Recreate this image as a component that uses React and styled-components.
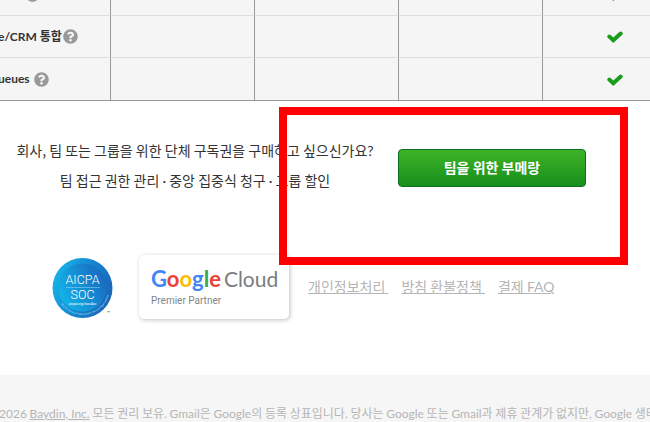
import React from 'react'
import styled, { createGlobalStyle } from 'styled-components'
import { FaQuestionCircle } from 'react-icons/fa'

const GlobalStyle = createGlobalStyle`
  * {
    box-sizing: border-box;
  }
  body {
    margin: 0;
    background: #fff;
    color: #333;
    font-family: "Noto Sans CJK KR", sans-serif;
    font-size: 14px;
    overflow-x: hidden;
  }
`

const Latin = styled.span`
  font-family: Lato, sans-serif;
  line-height: 1;
`

const Page = styled.div`
  position: relative;
  overflow: hidden;
`

const Features = styled.table`
  width: calc(100% + 37px);
  margin-top: -26px;
  table-layout: fixed;
  border-collapse: separate;
  border-spacing: 0;
  background: #f5f5f5;
  border-bottom: 1px solid #999;
`

const NameCell = styled.th`
  width: 111px;
  height: 42px;
  padding: 0;
  border-right: 1px solid #999;
  border-bottom: 1px solid #ddd;
  font-family: Lato, "Noto Sans CJK KR", sans-serif;
  font-size: 12px;
  font-weight: bold;
  line-height: 18px;
  text-align: left;
  white-space: nowrap;
  tr:last-child & {
    border-bottom: 0;
  }
`

const NameRow = styled.div`
  display: flex;
  align-items: center;
  gap: ${props => props.$gap}px;
  margin-left: ${props => props.$shift}px;
`

const Cell = styled.td`
  height: 42px;
  padding: 0;
  border-right: 1px solid #999;
  border-bottom: 1px solid #ddd;
  text-align: center;
  tr:last-child & {
    border-bottom: 0;
  }
  svg {
    display: block;
    margin: 2px auto 0;
  }
`

const HelpIcon = styled(FaQuestionCircle)`
  width: 15px;
  height: 15px;
  color: #999;
`

const Group = styled.section`
  display: flex;
  align-items: flex-start;
  padding: 34px 64px 0 0;
`

const GroupText = styled.div`
  flex: 1;
  padding-right: 8px;
  text-align: center;
  line-height: 30px;
  white-space: nowrap;
  p {
    margin: 0;
  }
`

const TeamButton = styled.button`
  width: 188px;
  height: 38px;
  margin: 14px 0 0;
  padding: 0 0 2px;
  border: 1px solid #0a6b22;
  border-radius: 4px;
  background: linear-gradient(#3fb327, #168f1c);
  color: #fff;
  font: bold 14px/20px "Noto Sans CJK KR", sans-serif;
  cursor: pointer;
`

const Partners = styled.section`
  display: flex;
  align-items: flex-start;
  padding: 60px 0 55px 52px;
`

const SocBadge = styled.svg`
  flex: none;
  width: 62px;
  height: 62px;
  margin-top: 3px;
`

const CloudCard = styled.div`
  flex: none;
  width: 150px;
  height: 64px;
  margin-left: 25px;
  padding: 10px 12px;
  border-radius: 5px;
  background: #fff;
  box-shadow: 1px 1px 4px rgba(0, 0, 0, 0.25);
  white-space: nowrap;
`

const CloudName = styled.div`
  display: flex;
  gap: 3px;
  color: #7b7d80;
  font-family: Lato, sans-serif;
  font-size: 21px;
  line-height: 28px;
`

const Letters = styled.span`
  font-size: 22px;
  font-weight: bold;
`

const Letter = styled.span`
  color: ${props => props.$color};
`

const CloudLevel = styled.div`
  color: #80868b;
  font: 10px/16px Roboto, sans-serif;
`

const Links = styled.nav`
  display: flex;
  gap: 13px;
  margin: 21px 0 0 19px;
  line-height: 20px;
  white-space: nowrap;
`

const GreyLink = styled.a`
  color: #b5b5b5;
  text-decoration: underline;
`

const Footer = styled.footer`
  height: 47px;
  padding-top: 29px;
  background: #f6f6f6;
  color: #b5b5b5;
  font-size: 12px;
  line-height: 18px;
  text-indent: -1px;
  white-space: nowrap;
`

const Highlight = styled.div`
  position: absolute;
  top: 107px;
  left: 279px;
  right: 22px;
  height: 158px;
  border: 8px solid #f00;
  pointer-events: none;
`

const Check = () => (
  <svg width="16" height="13" viewBox="0 0 16 13" aria-label="포함">
    <path
      d="M2.300 5.500 L6.300 9.200 L13.700 2.500"
      fill="none"
      stroke="#1a9d1a"
      strokeWidth="4"
      strokeLinecap="round"
    />
  </svg>
)

const features = [
  { name: '', gap: 0, shift: 25 },
  { name: 'e/CRM 통합', gap: 1, shift: -2 },
  { name: 'ueues', gap: 4, shift: -2 },
]

const google = [
  ['G', '#4285f4'],
  ['o', '#ea4335'],
  ['o', '#fbbc05'],
  ['g', '#4285f4'],
  ['l', '#34a853'],
  ['e', '#ea4335'],
]

const Soc = () => (
  <SocBadge viewBox="0 0 62 62" role="img" aria-label="AICPA SOC">
    <defs>
      <linearGradient id="ring" x1="0" y1="0.3" x2="1" y2="0.7">
        <stop offset="0" stopColor="#16b4e8" />
        <stop offset="0.5" stopColor="#1685cf" />
        <stop offset="1" stopColor="#1c62b5" />
      </linearGradient>
      <linearGradient id="disc" x1="0" y1="0.7" x2="1" y2="0.2">
        <stop offset="0" stopColor="#12b5ea" />
        <stop offset="1" stopColor="#1966bd" />
      </linearGradient>
      <path id="rim" d="M9 46 A27 27 0 0 0 57.500 27" />
    </defs>
    <circle cx="30.500" cy="30" r="30" fill="url(#ring)" />
    <circle cx="30.500" cy="29.500" r="24" fill="url(#disc)" />
    <g fill="#fff" textAnchor="middle" fontFamily="Roboto, sans-serif">
      <text x="30.500" y="25.500" fontSize="12.500" fontWeight="300">AICPA</text>
      <text x="30.500" y="41" fontSize="12.500" fontWeight="300">SOC</text>
      <text x="30.500" y="47" fontSize="3.500">aicpa.org/soc4so</text>
    </g>
    <path d="M14 29.500 H48" stroke="#8ccdf0" strokeWidth="0.600" />
    <text fill="#b5e2f7" fontSize="2.500" fontFamily="Roboto, sans-serif">
      <textPath href="#rim">SOC for Service Organizations | Service Organizations</textPath>
    </text>
    <text x="55" y="56" fontSize="4" fill="#555">™</text>
  </SocBadge>
)

const App = () => {
  return (
    <>
      <GlobalStyle />
      <Page>
        <Features>
          <tbody>
            {features.map((feature, i) => (
              <tr key={i}>
                <NameCell scope="row">
                  <NameRow $gap={feature.gap} $shift={feature.shift}>
                    {feature.name}
                    <HelpIcon />
                  </NameRow>
                </NameCell>
                <Cell />
                <Cell />
                <Cell />
                <Cell><Check /></Cell>
              </tr>
            ))}
          </tbody>
        </Features>
        <Group>
          <GroupText>
            <p>회사, 팀 또는 그룹을 위한 단체 구독권을 구매하고 싶으신가요<Latin>?</Latin></p>
            <p>팀 접근 권한 관리 <Latin>·</Latin> 중앙 집중식 청구 <Latin>·</Latin> 그룹 할인</p>
          </GroupText>
          <TeamButton type="button">팀을 위한 부메랑</TeamButton>
        </Group>
        <Partners>
          <Soc />
          <CloudCard>
            <CloudName>
              <Letters>
                {google.map(([letter, color], i) => (
                  <Letter key={i} $color={color}>{letter}</Letter>
                ))}
              </Letters>
              <span>Cloud</span>
            </CloudName>
            <CloudLevel>Premier Partner</CloudLevel>
          </CloudCard>
          <Links>
            <GreyLink href="#privacy">개인정보처리{'\u00a0'}</GreyLink>
            <GreyLink href="#refund">방침 환불정책{'\u00a0'}</GreyLink>
            <GreyLink href="#faq">결제 <Latin>FAQ</Latin></GreyLink>
          </Links>
        </Partners>
        <Footer>
          <Latin>2026</Latin> <GreyLink href="#baydin"><Latin>Baydin, Inc.</Latin></GreyLink> 모든 권리 보유<Latin>.</Latin>{' '}
          <Latin>Gmail</Latin>은 <Latin>Google</Latin>의 등록 상표입니다<Latin>.</Latin> 당사는 <Latin>Google</Latin> 또는{' '}
          <Latin>Gmail</Latin>과 제휴 관계가 없지만<Latin>,</Latin> <Latin>Google</Latin> 생태
        </Footer>
        <Highlight />
      </Page>
    </>
  )
}

export default App
